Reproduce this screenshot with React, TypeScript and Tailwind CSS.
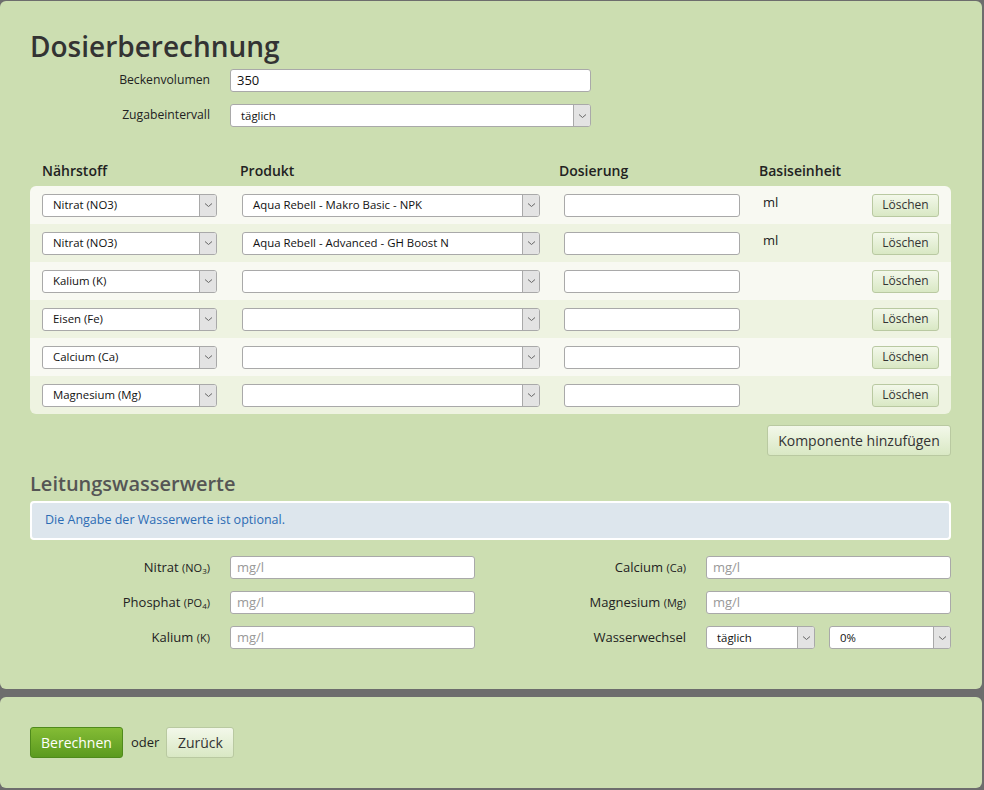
import React from "react";

const font = { fontFamily: '"Open Sans", "Liberation Sans", sans-serif' };

function Chevron() {
  return (
    <svg width="9" height="6" viewBox="0 0 9 6" className="block">
      <path d="M1 1.5 L4.5 4.5 L8 1.5" fill="none" stroke="#666" strokeWidth="1" />
    </svg>
  );
}

function Select({ value, className }: { value: string; className: string }) {
  return (
    <div
      className={`flex h-[23px] items-stretch overflow-hidden rounded-[3px] border border-[#a9a9a9] bg-white ${className}`}
    >
      <div className="flex flex-1 items-center truncate pl-[10px] text-[11.4px] text-[#111]">{value}</div>
      <div className="flex w-[17px] items-center justify-center border-l border-[#a9a9a9] bg-[#e3e3e3]">
        <Chevron />
      </div>
    </div>
  );
}

function Input({ value, placeholder, className }: { value?: string; placeholder?: string; className: string }) {
  return (
    <div
      className={`flex h-[23px] items-center rounded-[3px] border border-[#a9a9a9] bg-white pl-[6px] text-[13px] ${className}`}
    >
      {value ? <span className="text-[#111]">{value}</span> : <span className="text-[#999]">{placeholder}</span>}
    </div>
  );
}

function LButton({ children, className }: { children: React.ReactNode; className: string }) {
  return (
    <div
      className={`flex items-center justify-center rounded-[3px] border border-[#b9c9a1] bg-gradient-to-b from-[#f3f8ea] to-[#d9e8c4] text-[#333] ${className}`}
    >
      {children}
    </div>
  );
}

const rows = [
  { n: "Nitrat (NO3)", p: "Aqua Rebell - Makro Basic - NPK", u: "ml" },
  { n: "Nitrat (NO3)", p: "Aqua Rebell - Advanced - GH Boost N", u: "ml" },
  { n: "Kalium (K)", p: "", u: "" },
  { n: "Eisen (Fe)", p: "", u: "" },
  { n: "Calcium (Ca)", p: "", u: "" },
  { n: "Magnesium (Mg)", p: "", u: "" },
];

function WLabel({ main, sub, children }: { main: string; sub: React.ReactNode; children: React.ReactNode }) {
  return (
    <div className="flex h-[23px] items-center">
      <div className="w-[180px] text-right text-[13px] text-[#222]">
        {main} <span className="text-[11px]">{sub}</span>
      </div>
      <div className="ml-[20px] flex">{children}</div>
    </div>
  );
}

export default function App() {
  return (
    <div style={font} className="min-h-[790px] w-[984px] bg-[#6d6d6d] pt-[1px]">
      <div className="h-[688px] w-[982px] rounded-[6px] bg-[#ccdeb1] pl-[30px] pr-[31px] pt-[26px]">
        <h1 className="text-[28px] font-semibold leading-[38px] text-[#333]">Dosierberechnung</h1>
        <div className="mt-[4px] flex flex-col gap-[12px]">
          <div className="flex h-[23px] items-center">
            <div className="w-[180px] text-right text-[12.2px] text-[#222]">Beckenvolumen</div>
            <Input value="350" className="ml-[20px] w-[361px]" />
          </div>
          <div className="flex h-[23px] items-center">
            <div className="w-[180px] text-right text-[12.2px] text-[#222]">Zugabeintervall</div>
            <Select value="täglich" className="ml-[20px] w-[361px]" />
          </div>
        </div>

        <div className="mt-[33px] flex pl-[12px] text-[14px] font-semibold text-[#222]">
          <div className="w-[198px]">Nährstoff</div>
          <div className="w-[319px]">Produkt</div>
          <div className="w-[200px]">Dosierung</div>
          <div>Basiseinheit</div>
        </div>

        <div className="mt-[5px] overflow-hidden rounded-[6px]">
          {rows.map((r, i) => (
            <div
              key={i}
              className={`flex h-[38px] items-center pl-[12px] pr-[12px] ${i % 2 === 0 ? "bg-[#f8f9f2]" : "bg-[#eef3e1]"}`}
            >
              <Select value={r.n} className="w-[175px]" />
              <Select value={r.p} className="ml-[25px] w-[298px]" />
              <Input className="ml-[24px] w-[176px]" />
              <div className="ml-[23px] -mt-[5px] w-[40px] text-[13px] text-[#222]">{r.u}</div>
              <LButton className="ml-auto h-[23px] w-[67px] text-[12px]">Löschen</LButton>
            </div>
          ))}
        </div>

        <div className="mt-[11px] flex justify-end">
          <LButton className="h-[31px] w-[184px] text-[14px]">Komponente hinzufügen</LButton>
        </div>

        <h2 className="mt-[14px] text-[20px] font-semibold leading-[28px] text-[#555]">Leitungswasserwerte</h2>
        <div className="mt-[3px] flex h-[39px] items-center rounded-[4px] border-[2px] border-white bg-[#dde6ed] pl-[13px] text-[12.5px] text-[#2c6cb4]">
          Die Angabe der Wasserwerte ist optional.
        </div>

        <div className="mt-[16px] grid grid-cols-[445px_445px] justify-between gap-y-[12px]">
          <WLabel main="Nitrat" sub={<>(NO<sub className="text-[8px]">3</sub>)</>}>
            <Input placeholder="mg/l" className="w-[245px]" />
          </WLabel>
          <WLabel main="Calcium" sub="(Ca)">
            <Input placeholder="mg/l" className="w-[245px]" />
          </WLabel>
          <WLabel main="Phosphat" sub={<>(PO<sub className="text-[8px]">4</sub>)</>}>
            <Input placeholder="mg/l" className="w-[245px]" />
          </WLabel>
          <WLabel main="Magnesium" sub="(Mg)">
            <Input placeholder="mg/l" className="w-[245px]" />
          </WLabel>
          <WLabel main="Kalium" sub="(K)">
            <Input placeholder="mg/l" className="w-[245px]" />
          </WLabel>
          <div className="flex h-[23px] items-center">
            <div className="w-[180px] text-right text-[13px] text-[#222]">Wasserwechsel</div>
            <Select value="täglich" className="ml-[20px] w-[109px]" />
            <Select value="0%" className="ml-[14px] w-[122px]" />
          </div>
        </div>
      </div>

      <div className="mt-[8px] h-[91px] w-[982px] rounded-[6px] bg-[#ccdeb1] pl-[30px] pt-[30px]">
        <div className="flex items-center">
          <div className="flex h-[31px] w-[93px] items-center justify-center rounded-[3px] border border-[#4f8a1c] bg-gradient-to-b from-[#84bc35] to-[#5b9a1f] text-[14px] text-white">
            Berechnen
          </div>
          <span className="ml-[8px] text-[13px] text-[#222]">oder</span>
          <LButton className="ml-[7px] h-[31px] w-[68px] text-[14px]">Zurück</LButton>
        </div>
      </div>
    </div>
  );
}
